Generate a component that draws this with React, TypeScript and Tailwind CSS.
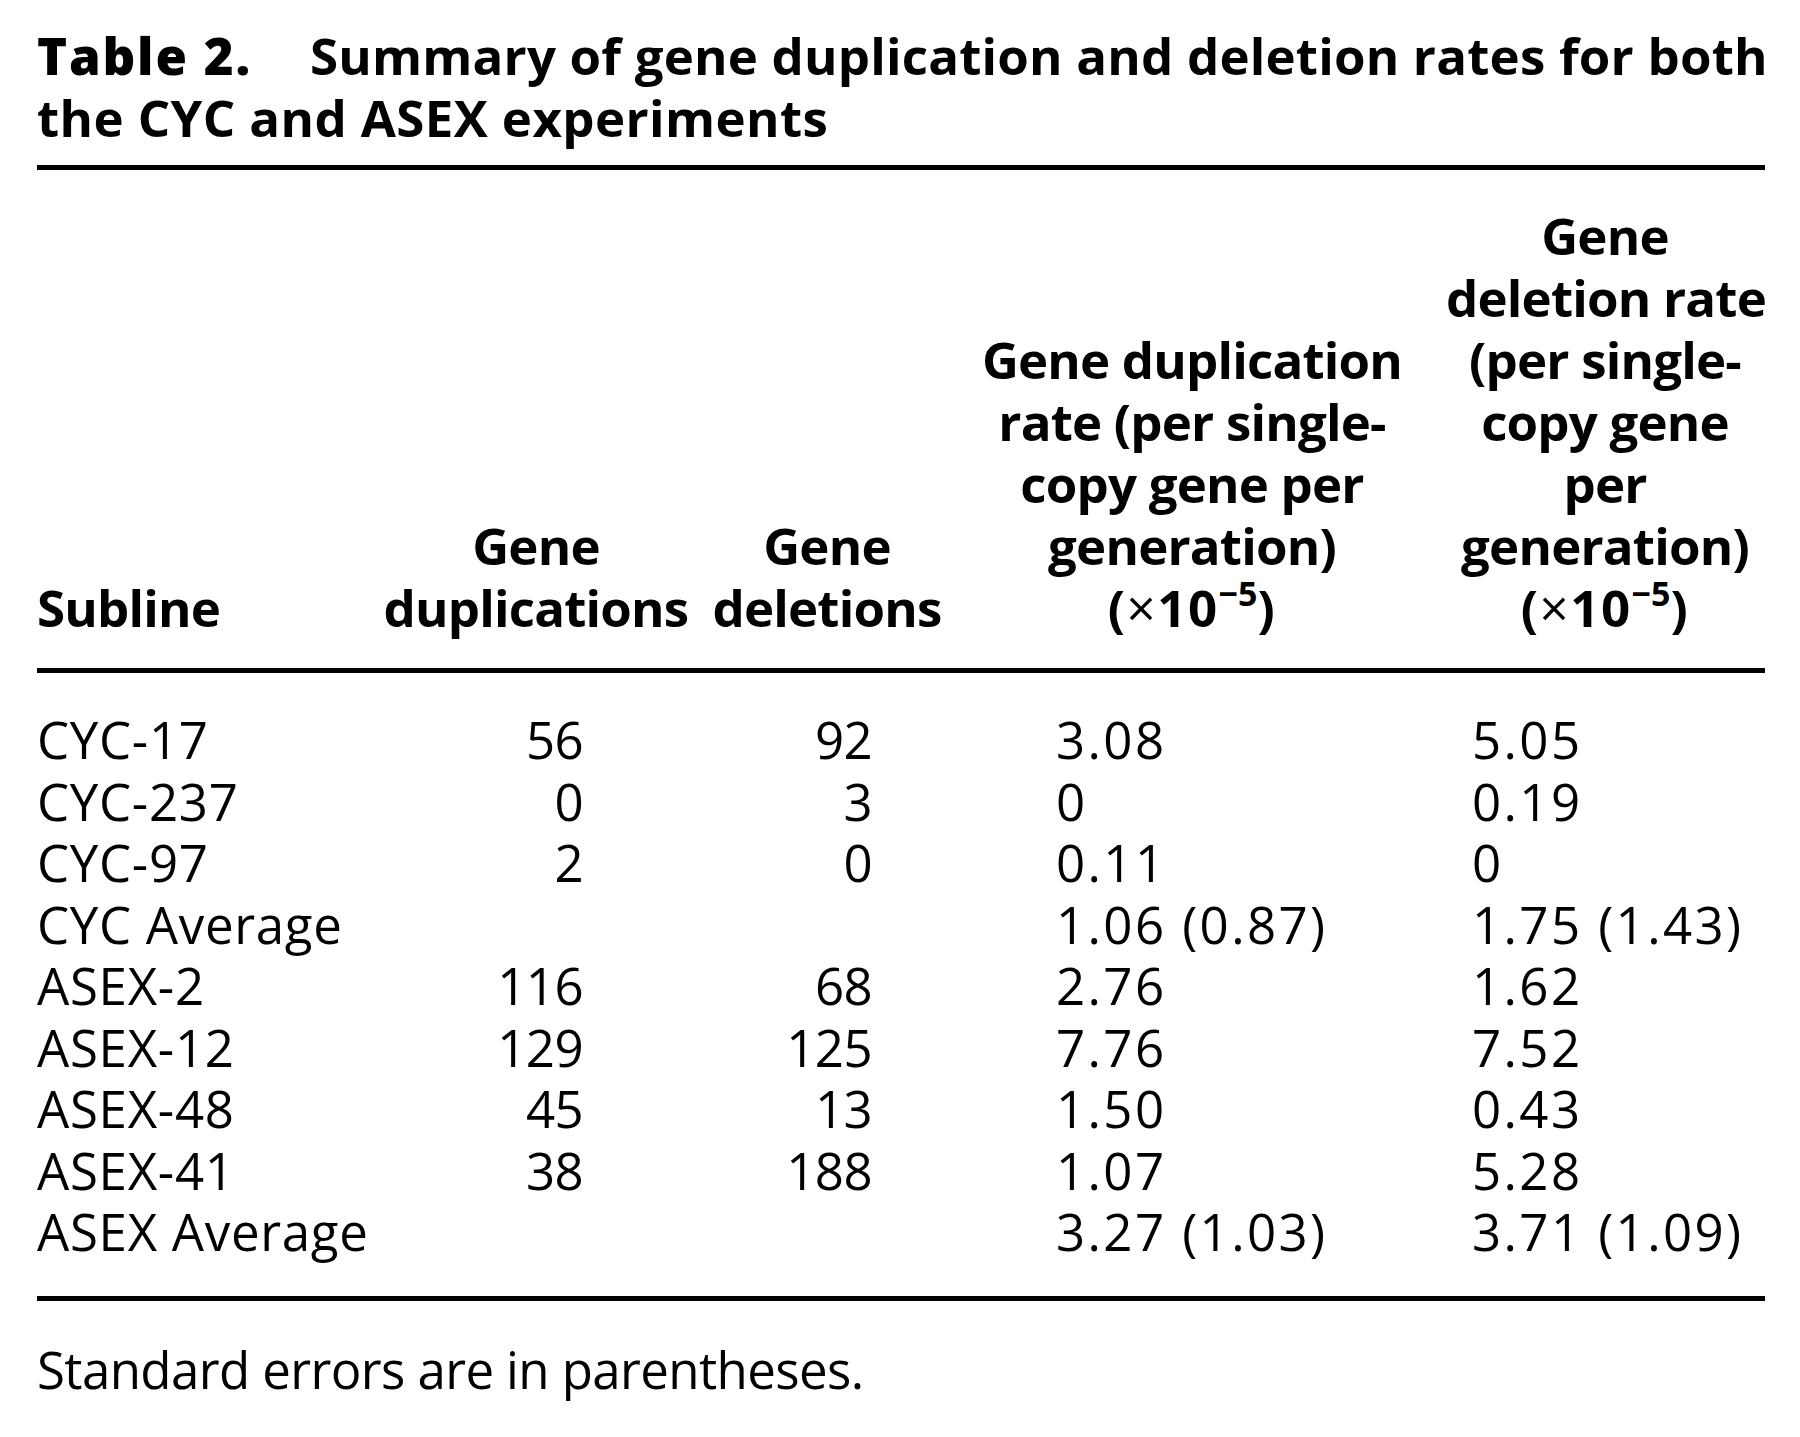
import React from "react";

const rows: [string, string, string, string, string][] = [
  ["CYC-17", "56", "92", "3.08", "5.05"],
  ["CYC-237", "0", "3", "0", "0.19"],
  ["CYC-97", "2", "0", "0.11", "0"],
  ["CYC Average", "", "", "1.06 (0.87)", "1.75 (1.43)"],
  ["ASEX-2", "116", "68", "2.76", "1.62"],
  ["ASEX-12", "129", "125", "7.76", "7.52"],
  ["ASEX-48", "45", "13", "1.50", "0.43"],
  ["ASEX-41", "38", "188", "1.07", "5.28"],
  ["ASEX Average", "", "", "3.27 (1.03)", "3.71 (1.09)"],
];

function Exp() {
  return (
    <span className="tracking-[1.5px]">
      (<span className="font-normal">×</span>10
      <sup className="text-[34px] -top-[21px] tracking-[0px]">−5</sup>)
    </span>
  );
}

export default function App() {
  return (
    <div
      className="w-[1800px] h-[1437px] bg-white text-black pl-[37px] pt-[24px]"
      style={{ fontFamily: '"Open Sans", "Noto Sans", sans-serif' }}
    >
      <div className="w-[1727px] text-[51px] leading-[62px] font-bold">
        <div className="flex whitespace-nowrap">
          <span className="font-extrabold tracking-[1.8px]">Table 2.</span>
          <span className="ml-[58px] tracking-[0.2px]">
            Summary of gene duplication and deletion rates for both
          </span>
        </div>
        <div className="whitespace-nowrap tracking-[0.4px]">the CYC and ASEX experiments</div>
      </div>

      <div className="w-[1728px] mt-[17px] border-t-[5px] border-black" />

      <div className="grid grid-cols-[343px_312px_270px_484px_318px] mt-[34px] text-[51px] leading-[62px] font-bold tracking-[-0.8px] items-end">
        <div>Subline</div>
        <div className="text-center">
          Gene
          <br />
          duplications
        </div>
        <div className="text-center">
          Gene
          <br />
          deletions
        </div>
        <div className="text-center pr-[24px] whitespace-nowrap">
          Gene duplication
          <br />
          rate (per single-
          <br />
          copy gene per
          <br />
          generation)
          <br />
          <Exp />
        </div>
        <div className="text-center whitespace-nowrap">
          Gene
          <br />
          deletion rate
          <br />
          (per single-
          <br />
          copy gene
          <br />
          per
          <br />
          generation)
          <br />
          <Exp />
        </div>
      </div>

      <div className="w-[1728px] mt-[30px] border-t-[5px] border-black" />

      <div className="grid grid-cols-[343px_312px_270px_484px_318px] mt-[36px] text-[51px] leading-[61.5px]">
        {rows.map((r) => (
          <React.Fragment key={r[0]}>
            <div className="whitespace-nowrap tracking-[0.7px]">{r[0]}</div>
            <div className="text-right pr-[109px] tracking-[-0.6px]">{r[1]}</div>
            <div className="text-right pr-[90px] tracking-[-0.6px]">{r[2]}</div>
            <div className="pl-[94px] whitespace-nowrap tracking-[2.4px]">{r[3]}</div>
            <div className="pl-[26px] whitespace-nowrap tracking-[2.4px]">{r[4]}</div>
          </React.Fragment>
        ))}
      </div>

      <div className="w-[1728px] mt-[33px] border-t-[5px] border-black" />

      <div className="mt-[37px] text-[51px] leading-[62px] tracking-[-0.6px]">
        Standard errors are in parentheses.
      </div>
    </div>
  );
}
